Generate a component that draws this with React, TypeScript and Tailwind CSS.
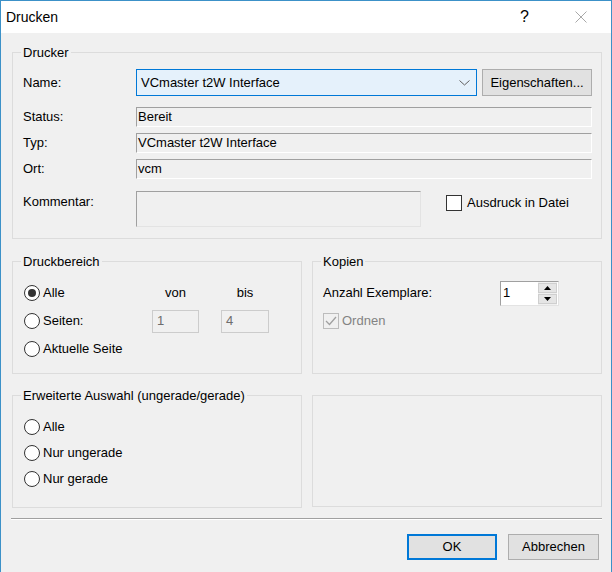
import React from 'react';

function Radio({ label, checked = false }: { label: string; checked?: boolean }) {
  return (
    <label className="flex items-center gap-[3px]">
      <span className="w-4 h-4 rounded-full border border-[#333333] bg-white flex items-center justify-center">
        {checked && <span className="w-2 h-2 rounded-full bg-[#333333]" />}
      </span>
      <span>{label}</span>
    </label>
  );
}

function Field({ value }: { value: string }) {
  return (
    <div className="h-5 flex-1 flex items-center pl-[1px] border-t border-l border-t-[#a0a0a0] border-l-[#a0a0a0] border-b border-r border-b-white border-r-white bg-[#f0f0f0]">
      {value}
    </div>
  );
}

function GroupLegend({ children }: { children: React.ReactNode }) {
  return <legend className="ml-[8px] px-[2px] leading-[15px]">{children}</legend>;
}

export default function App() {
  return (
    <div className="w-[612px] h-[572px] bg-[#f0f0f0] border-x border-t border-[#3c91c8] flex flex-col font-['Liberation_Sans',Arial,sans-serif] text-[13px] text-black overflow-hidden">
      {/* Titelleiste */}
      <div className="h-8 bg-white flex items-center justify-between pl-[5px] shrink-0">
        <span className="text-[14px]">Drucken</span>
        <div className="flex items-center">
          <span className="text-[16px] leading-none">?</span>
          <svg className="ml-[46px] mr-[24px]" width="12" height="12" viewBox="0 0 12 12">
            <path d="M0.5 0.5 L11.5 11.5 M11.5 0.5 L0.5 11.5" stroke="#a8a8a8" strokeWidth="1" fill="none" />
          </svg>
        </div>
      </div>

      <div className="flex flex-col pl-[11px] pr-[9px]">
        {/* Drucker */}
        <fieldset className="mt-[12px] border border-[#dcdcdc]">
          <GroupLegend>Drucker</GroupLegend>
          <div className="pt-[9px] pb-[11px] pl-[10px] pr-[9px] flex flex-col">
            <div className="flex items-center h-[27px]">
              <span className="w-[113px]">Name:</span>
              <div className="w-[341px] h-[27px] bg-[#e5f1fb] border border-[#0078d7] flex items-center justify-between pl-[4px] pr-[6px]">
                <span>VCmaster t2W Interface</span>
                <svg width="11" height="6" viewBox="0 0 11 6">
                  <polyline points="0.5,0.5 5.5,5 10.5,0.5" stroke="#606060" strokeWidth="1" fill="none" />
                </svg>
              </div>
              <button className="ml-[5px] w-[110px] h-[27px] bg-[#e1e1e1] border border-[#adadad] text-center">
                Eigenschaften...
              </button>
            </div>

            <div className="flex items-center mt-[11px]">
              <span className="w-[113px]">Status:</span>
              <Field value="Bereit" />
            </div>
            <div className="flex items-center mt-[6px]">
              <span className="w-[113px]">Typ:</span>
              <Field value="VCmaster t2W Interface" />
            </div>
            <div className="flex items-center mt-[6px]">
              <span className="w-[113px]">Ort:</span>
              <Field value="vcm" />
            </div>

            <div className="flex items-start mt-[12px]">
              <span className="w-[113px] mt-[1px]">Kommentar:</span>
              <div className="w-[285px] h-[36px] border-t border-l border-t-[#a0a0a0] border-l-[#a0a0a0] border-b border-r border-b-[#e3e3e3] border-r-[#e3e3e3]" />
              <label className="ml-[25px] mt-[2px] flex items-center gap-[5px]">
                <span className="w-4 h-4 border border-[#333333] bg-white" />
                <span>Ausdruck in Datei</span>
              </label>
            </div>
          </div>
        </fieldset>

        {/* Druckbereich / Kopien */}
        <div className="flex gap-[10px] mt-[15px]">
          <fieldset className="w-[290px] border border-[#dcdcdc]">
            <GroupLegend>Druckbereich</GroupLegend>
            <div className="pt-[10px] pb-[10px] grid grid-cols-[139px_69px_48px] auto-rows-[28px] items-center">
              <div className="pl-[11px]">
                <Radio label="Alle" checked />
              </div>
              <div className="w-[47px] text-center">von</div>
              <div className="w-[48px] text-center">bis</div>

              <div className="pl-[11px]">
                <Radio label="Seiten:" />
              </div>
              <div className="w-[47px] h-[23px] border border-[#cccccc] flex items-center pl-[4px] text-[#6d6d6d]">1</div>
              <div className="w-[48px] h-[23px] border border-[#cccccc] flex items-center pl-[4px] text-[#6d6d6d]">4</div>

              <div className="pl-[11px]">
                <Radio label="Aktuelle Seite" />
              </div>
              <div />
              <div />
            </div>
          </fieldset>

          <fieldset className="w-[290px] border border-[#dcdcdc]">
            <GroupLegend>Kopien</GroupLegend>
            <div className="pt-[10px] pl-[10px] pr-[42px] flex flex-col">
              <div className="h-[28px] flex items-center justify-between">
                <span>Anzahl Exemplare:</span>
                <div className="w-[59px] h-[25px] flex border-t border-l border-t-[#a0a0a0] border-l-[#a0a0a0] border-b border-r border-b-[#e3e3e3] border-r-[#e3e3e3] bg-white">
                  <div className="flex-1 flex items-center pl-[2px]">1</div>
                  <div className="w-[19px] flex flex-col gap-[1px] py-[1px] mr-[1px] bg-[#f0f0f0]">
                    <div className="flex-1 bg-[#e5e5e5] border border-[#cfcfcf] flex items-center justify-center">
                      <svg width="7" height="4" viewBox="0 0 7 4"><polygon points="3.5,0 7,4 0,4" fill="#000" /></svg>
                    </div>
                    <div className="flex-1 bg-[#e5e5e5] border border-[#cfcfcf] flex items-center justify-center">
                      <svg width="7" height="4" viewBox="0 0 7 4"><polygon points="0,0 7,0 3.5,4" fill="#000" /></svg>
                    </div>
                  </div>
                </div>
              </div>
              <div className="h-[28px] flex items-center">
                <label className="flex items-center gap-[3px] text-[#838383]">
                  <span className="w-4 h-4 border border-[#bcbcbc] bg-[#f0f0f0] flex items-center justify-center">
                    <svg width="12" height="10" viewBox="0 0 12 10">
                      <polyline points="1,5 4.5,8.5 11,1" stroke="#a0a0a0" strokeWidth="1.3" fill="none" />
                    </svg>
                  </span>
                  <span>Ordnen</span>
                </label>
              </div>
            </div>
          </fieldset>
        </div>

        {/* Erweiterte Auswahl */}
        <div className="flex gap-[10px] mt-[14px] items-stretch">
          <fieldset className="w-[290px] border border-[#dcdcdc]">
            <GroupLegend>Erweiterte Auswahl (ungerade/gerade)</GroupLegend>
            <div className="pt-[11px] pb-[15px] pl-[11px] flex flex-col">
              <div className="h-[26px] flex items-center"><Radio label="Alle" /></div>
              <div className="h-[26px] flex items-center"><Radio label="Nur ungerade" /></div>
              <div className="h-[26px] flex items-center"><Radio label="Nur gerade" /></div>
            </div>
          </fieldset>
          <div className="w-[290px] mt-[7px] mb-[1px] border border-[#dcdcdc]" />
        </div>

        {/* Trennlinie */}
        <div className="mt-[10px] -ml-[1px] border-t border-[#a0a0a0] border-b border-b-white" />

        {/* Schaltflächen */}
        <div className="mt-[14px] flex justify-end gap-[11px] pr-[3px]">
          <button className="w-[90px] h-[26px] bg-[#e1e1e1] border-2 border-[#0078d7]">OK</button>
          <button className="w-[91px] h-[26px] bg-[#e1e1e1] border border-[#adadad]">Abbrechen</button>
        </div>
      </div>
    </div>
  );
}
